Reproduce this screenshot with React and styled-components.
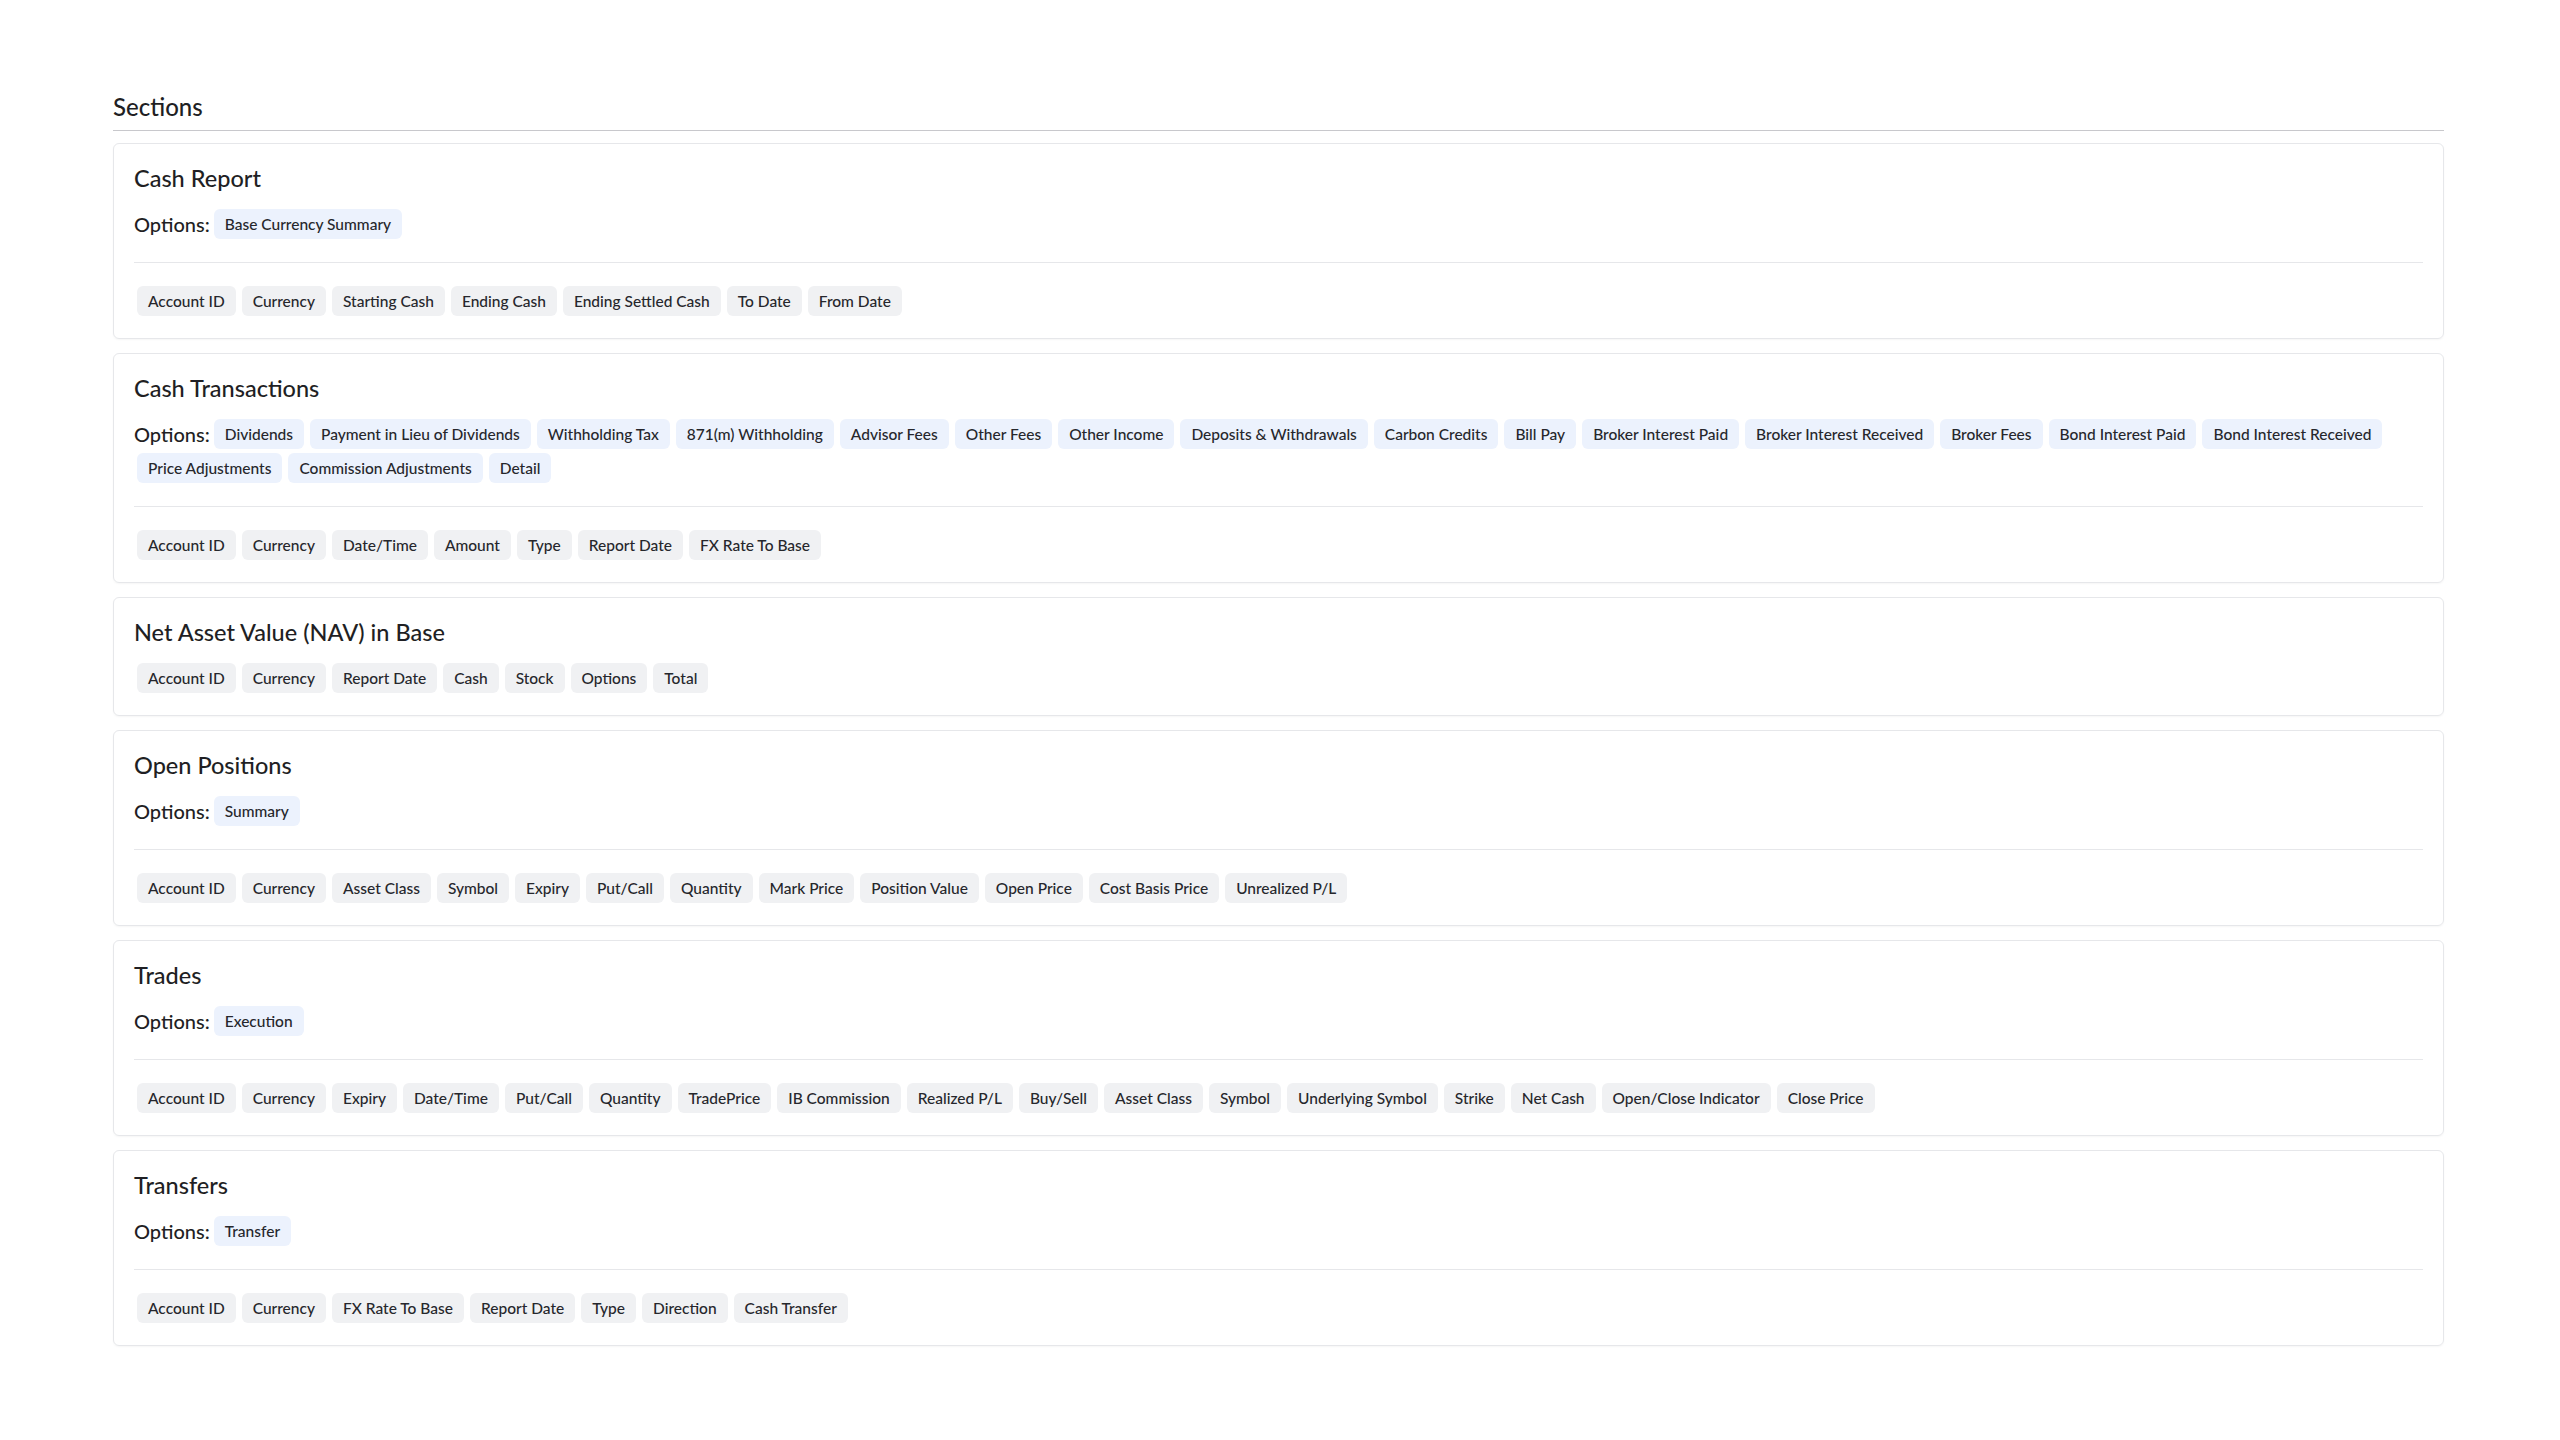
import React from 'react'
import styled, { createGlobalStyle } from 'styled-components'

const GlobalStyle = createGlobalStyle`
  * { box-sizing: border-box; }
  body {
    margin: 0;
    background: #ffffff;
    font-family: Lato, "Noto Sans", "Liberation Sans", sans-serif;
    color: #1f1f24;
  }
`

const Page = styled.div`
  padding: 92px 116px 80px 113px;
`

const Heading = styled.h2`
  margin: 0;
  padding-bottom: 9px;
  font-size: 24px;
  line-height: 29px;
  font-weight: 500;
  border-bottom: 1px solid #c8c8cc;
`

const List = styled.div`
  display: flex;
  flex-direction: column;
  gap: 14px;
  margin-top: 12px;
`

const Card = styled.section`
  border: 1px solid #e6e7ea;
  border-radius: 6px;
  padding: 20px;
  box-shadow: 0 1px 2px rgba(0, 0, 0, 0.04);
`

const Title = styled.h3`
  margin: 0 0 14px;
  font-size: 23.5px;
  line-height: 29px;
  font-weight: 500;
`

const ChipRow = styled.div`
  display: flex;
  flex-wrap: wrap;
  align-items: center;
`

const Label = styled.span`
  font-size: 20px;
  line-height: 34px;
  font-weight: 500;
  margin-right: 1px;
`

const Chip = styled.span`
  display: inline-flex;
  align-items: center;
  height: 30px;
  margin: 2px 3px;
  padding: 0 11px;
  border-radius: 6px;
  font-size: 15.5px;
  font-weight: 500;
  color: #26272c;
  background: ${p => (p.$option ? '#ecf2fd' : '#f0f1f3')};
  white-space: nowrap;
`

const Divider = styled.hr`
  margin: 21px 0;
  border: 0;
  border-top: 1px solid #e6e7ea;
`

const sections = [
  {
    title: 'Cash Report',
    options: ['Base Currency Summary'],
    columns: ['Account ID', 'Currency', 'Starting Cash', 'Ending Cash', 'Ending Settled Cash', 'To Date', 'From Date'],
  },
  {
    title: 'Cash Transactions',
    options: [
      'Dividends', 'Payment in Lieu of Dividends', 'Withholding Tax', '871(m) Withholding', 'Advisor Fees',
      'Other Fees', 'Other Income', 'Deposits & Withdrawals', 'Carbon Credits', 'Bill Pay',
      'Broker Interest Paid', 'Broker Interest Received', 'Broker Fees', 'Bond Interest Paid',
      'Bond Interest Received', 'Price Adjustments', 'Commission Adjustments', 'Detail',
    ],
    columns: ['Account ID', 'Currency', 'Date/Time', 'Amount', 'Type', 'Report Date', 'FX Rate To Base'],
  },
  {
    title: 'Net Asset Value (NAV) in Base',
    options: [],
    columns: ['Account ID', 'Currency', 'Report Date', 'Cash', 'Stock', 'Options', 'Total'],
  },
  {
    title: 'Open Positions',
    options: ['Summary'],
    columns: [
      'Account ID', 'Currency', 'Asset Class', 'Symbol', 'Expiry', 'Put/Call', 'Quantity', 'Mark Price',
      'Position Value', 'Open Price', 'Cost Basis Price', 'Unrealized P/L',
    ],
  },
  {
    title: 'Trades',
    options: ['Execution'],
    columns: [
      'Account ID', 'Currency', 'Expiry', 'Date/Time', 'Put/Call', 'Quantity', 'TradePrice', 'IB Commission',
      'Realized P/L', 'Buy/Sell', 'Asset Class', 'Symbol', 'Underlying Symbol', 'Strike', 'Net Cash',
      'Open/Close Indicator', 'Close Price',
    ],
  },
  {
    title: 'Transfers',
    options: ['Transfer'],
    columns: ['Account ID', 'Currency', 'FX Rate To Base', 'Report Date', 'Type', 'Direction', 'Cash Transfer'],
  },
]

const SectionCard = ({ title, options, columns }) => (
  <Card>
    <Title>{title}</Title>
    {options.length > 0 && (
      <>
        <ChipRow>
          <Label>Options:</Label>
          {options.map(o => <Chip key={o} $option>{o}</Chip>)}
        </ChipRow>
        <Divider />
      </>
    )}
    <ChipRow>
      {columns.map(c => <Chip key={c}>{c}</Chip>)}
    </ChipRow>
  </Card>
)

export default function App() {
  return (
    <Page>
      <GlobalStyle />
      <Heading>Sections</Heading>
      <List>
        {sections.map(s => <SectionCard key={s.title} {...s} />)}
      </List>
    </Page>
  )
}
